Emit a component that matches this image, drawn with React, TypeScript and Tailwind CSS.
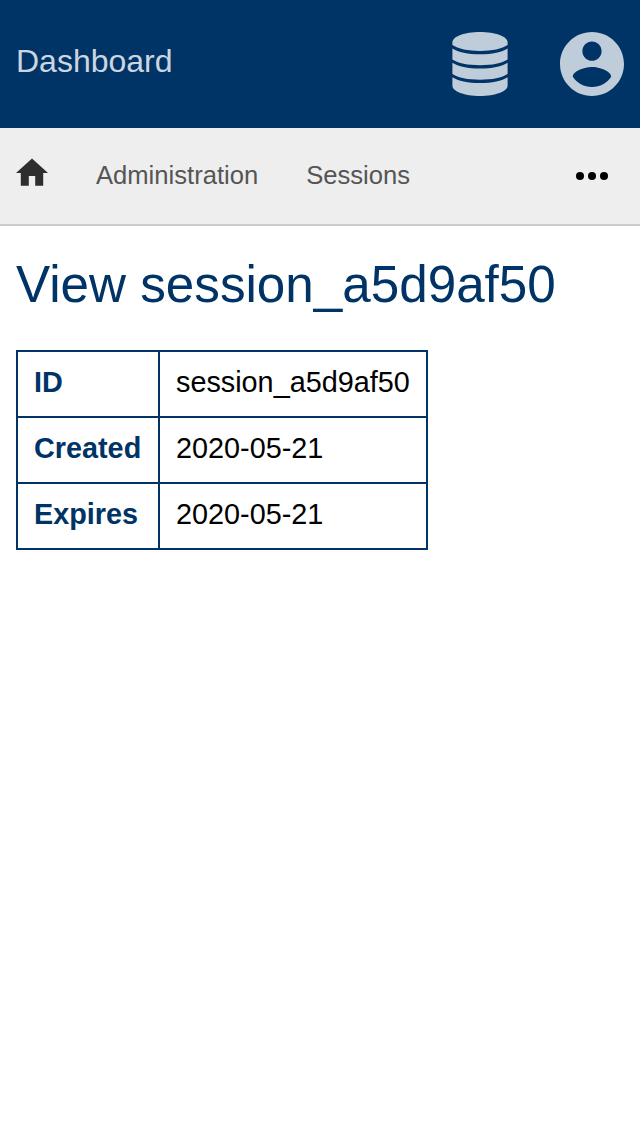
import type { ReactNode } from 'react';

const session: { label: string; value: string }[] = [
  { label: 'ID', value: 'session_a5d9af50' },
  { label: 'Created', value: '2020-05-21' },
  { label: 'Expires', value: '2020-05-21' },
];

function IconButton({ label, children }: { label: string; children: ReactNode }) {
  return (
    <button type="button" aria-label={label} className="size-16 text-[#bfccd9]">
      {children}
    </button>
  );
}

function Header() {
  return (
    <header className="flex h-32 items-center justify-between bg-[#003366] px-4">
      <span className="-mt-1.5 text-[32px] leading-10 text-[#ccd6e0]">Dashboard</span>
      <div className="flex gap-12">
        <IconButton label="Database">
          <svg viewBox="0 0 64 64" className="size-16" fill="currentColor">
            <path d="M32 0C16.500 0 4.400 4.600 4.400 10.200V13C10 16.900 20 18.900 32 18.900s22-2 27.600-5.900V10.200C59.600 4.600 47.500 0 32 0Z" />
            <path d="M4.400 16.400C10 20.200 20 22.200 32 22.200s22-2 27.600-5.800V27.600C54 31.400 44 33.300 32 33.300S10 31.400 4.400 27.600Z" />
            <path d="M4.400 30.800C10 34.600 20 36.600 32 36.600s22-2 27.600-5.800V42C54 45.800 44 47.700 32 47.700S10 45.800 4.400 42Z" />
            <path d="M4.400 45.200C10 49 20 51 32 51s22-2 27.600-5.800V53.800C59.600 59.400 47.500 64 32 64S4.400 59.400 4.400 53.800Z" />
          </svg>
        </IconButton>
        <IconButton label="Account">
          <svg viewBox="2 2 20 20" className="size-16" fill="currentColor">
            <path d="M12 2C6.480 2 2 6.480 2 12s4.480 10 10 10 10-4.480 10-10S17.520 2 12 2zm0 3c1.660 0 3 1.340 3 3s-1.340 3-3 3-3-1.340-3-3 1.340-3 3-3zm0 14.200c-2.500 0-4.710-1.280-6-3.220.030-1.990 4-3.080 6-3.080 1.990 0 5.970 1.090 6 3.080-1.290 1.940-3.500 3.220-6 3.220z" />
          </svg>
        </IconButton>
      </div>
    </header>
  );
}

function Breadcrumbs() {
  return (
    <nav className="flex h-[98px] items-center border-b-2 border-[#cccccc] bg-[#eeeeee] px-4 text-[25.6px] leading-8 text-[#555555]">
      <a href="#home" aria-label="Home" className="mr-12 mb-2 text-[#2e2e2e]">
        <svg viewBox="2 2.700 20 17.500" className="block h-7 w-8" fill="currentColor">
          <path d="M10 20v-6h4v6h5v-8h3L12 3 2 12h3v8z" />
        </svg>
      </a>
      <a href="#administration" className="mr-12 mb-0.5">Administration</a>
      <a href="#sessions" className="mb-0.5">Sessions</a>
      <button type="button" aria-label="More" className="mr-4 ml-auto text-black">
        <svg viewBox="0 0 32 8" className="h-2 w-8" fill="currentColor">
          <circle cx="4" cy="4" r="4" />
          <circle cx="16" cy="4" r="4" />
          <circle cx="28" cy="4" r="4" />
        </svg>
      </button>
    </nav>
  );
}

export default function App() {
  return (
    <div className="min-h-screen bg-white font-['Liberation_Sans',Arial,sans-serif] text-black">
      <Header />
      <Breadcrumbs />
      <main className="px-4 pt-[29px]">
        <h1 className="text-[51.2px] leading-[60px] text-[#003366]">View session_a5d9af50</h1>
        <table className="mt-[35px] border-collapse text-[28.8px] leading-8">
          <tbody>
            {session.map(({ label, value }) => (
              <tr key={label}>
                <th className="w-[142px] border-2 border-[#003366] px-4 pt-3.5 pb-[18px] text-left font-bold text-[#003366]">{label}</th>
                <td className="border-2 border-[#003366] px-4 pt-3.5 pb-[18px]">{value}</td>
              </tr>
            ))}
          </tbody>
        </table>
      </main>
    </div>
  );
}
